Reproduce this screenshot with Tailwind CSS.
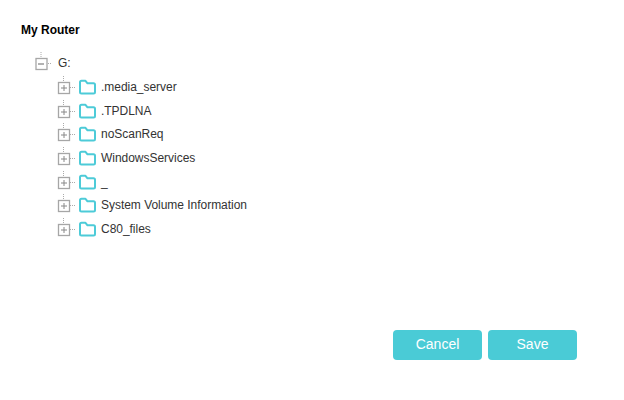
<!DOCTYPE html>
<html lang="en">
<head>
    <meta charset="UTF-8">
    <script src="https://cdn.jsdelivr.net/npm/@tailwindcss/browser@4"></script>
    <title>My Router</title>
</head>
<body class="bg-white font-['Liberation_Sans',Arial,sans-serif] text-[12px] text-[#333]">
    <!-- shared icon for the folder rows -->
    <svg width="0" height="0" class="absolute">
        <symbol id="folderRow" viewBox="0 0 44 24">
            <path d="M6.500 1v5M13 12.500h6" stroke="#aaa" stroke-dasharray="1 1" fill="none"/>
            <rect x="1.500" y="7.500" width="11" height="11" stroke="#a6a6a6" stroke-width="1.300" fill="none"/>
            <path d="M4 13h6M7 10v6" stroke="#888" fill="none"/>
            <path d="M23 7.300a1.500 1.500 0 0 1 1.500-1.500h4l2 2.500h6a1.500 1.500 0 0 1 1.500 1.500v7.200a1.500 1.500 0 0 1-1.500 1.500h-12a1.500 1.500 0 0 1-1.500-1.500z" stroke="#4dcbd8" stroke-width="2" stroke-linejoin="round" fill="none"/>
        </symbol>
    </svg>

    <div class="w-[624px] h-[400px] flex flex-col overflow-hidden">
        <h1 class="pl-[21px] pt-[23px] h-[51px] leading-[15px] font-bold text-black">My Router</h1>

        <div class="pl-[33px]">
            <!-- root -->
            <div class="flex items-center h-[24px]">
                <svg width="26" height="24" viewBox="0 0 26 24" fill="none">
                    <path d="M8 1v5M15 12.500h4" stroke="#aaa" stroke-dasharray="1 1"/>
                    <rect x="3" y="7.500" width="11" height="11" stroke="#a6a6a6" stroke-width="1.300"/>
                    <path d="M5 13h6" stroke="#888" stroke-width="1.300"/>
                </svg>
                <span class="ml-[-1px]">G:</span>
            </div>

            <ul class="pl-[24px] tracking-[-0.03px]">
                <li class="flex items-center h-[23.7px]"><svg class="shrink-0" width="44" height="24"><use href="#folderRow"/></svg><span>.media_server</span></li>
                <li class="flex items-center h-[23.7px]"><svg class="shrink-0" width="44" height="24"><use href="#folderRow"/></svg><span>.TPDLNA</span></li>
                <li class="flex items-center h-[23.7px]"><svg class="shrink-0" width="44" height="24"><use href="#folderRow"/></svg><span>noScanReq</span></li>
                <li class="flex items-center h-[23.7px]"><svg class="shrink-0" width="44" height="24"><use href="#folderRow"/></svg><span>WindowsServices</span></li>
                <li class="flex items-center h-[23.7px]"><svg class="shrink-0" width="44" height="24"><use href="#folderRow"/></svg><span>_</span></li>
                <li class="flex items-center h-[23.7px]"><svg class="shrink-0" width="44" height="24"><use href="#folderRow"/></svg><span>System Volume Information</span></li>
                <li class="flex items-center h-[23.7px]"><svg class="shrink-0" width="44" height="24"><use href="#folderRow"/></svg><span>C80_files</span></li>
            </ul>
        </div>

        <div class="flex gap-[6px] pl-[393px] mt-[89px]">
            <button class="w-[89px] h-[30px] rounded-[4px] bg-[#4acbd6] text-white text-[14px]">Cancel</button>
            <button class="w-[89px] h-[30px] rounded-[4px] bg-[#4acbd6] text-white text-[14px]">Save</button>
        </div>
    </div>
</body>
</html>
